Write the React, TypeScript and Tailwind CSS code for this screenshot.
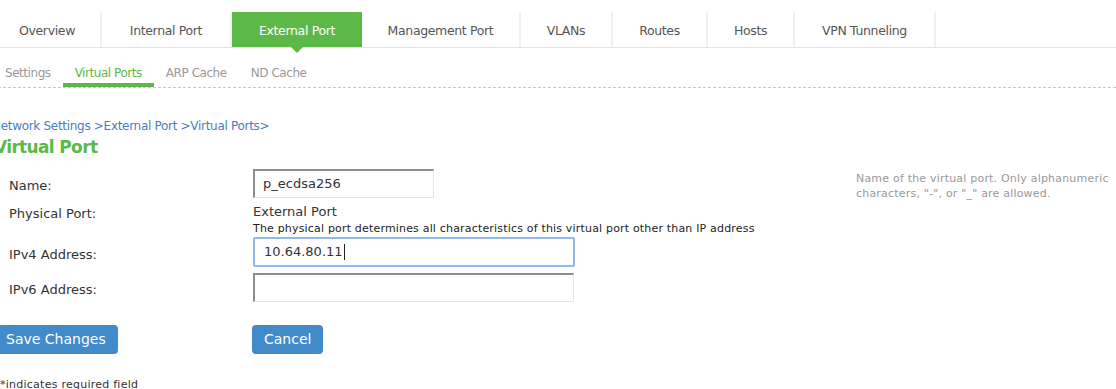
import React from 'react';

const tabs = [
  { label: 'Overview', w: 'w-[108px]' },
  { label: 'Internal Port', w: 'w-[130px]' },
  { label: 'External Port', w: 'w-[130px]', active: true },
  { label: 'Management Port', w: 'w-[159px]' },
  { label: 'VLANs', w: 'w-[92px]' },
  { label: 'Routes', w: 'w-[95px]' },
  { label: 'Hosts', w: 'w-[87px]' },
  { label: 'VPN Tunneling', w: 'w-[141px]' },
];

const subTabs = ['Settings', 'Virtual Ports', 'ARP Cache', 'ND Cache'];

function Row({ label, children, className = '', labelClass = '' }: { label: string; children: React.ReactNode; className?: string; labelClass?: string }) {
  return (
    <div className={`flex ${className}`}>
      <div className={`w-[259px] shrink-0 pl-[15px] text-[13px] text-[#333] ${labelClass}`}>{label}</div>
      <div>{children}</div>
    </div>
  );
}

export default function App() {
  return (
    <div className="h-[389px] w-[1116px] overflow-hidden bg-white font-['DejaVu_Sans',sans-serif]">
      <div className="-ml-[6px]">
        {/* main tabs */}
        <div className="mt-[12px] flex h-[36px] border-b border-[#e2e2e2]">
          {tabs.map((t) => (
            <div
              key={t.label}
              className={`relative flex ${t.w} items-center justify-center pt-[4px] text-[12.5px] tracking-[-0.35px] ${
                t.active ? 'bg-[#5cb947] text-white' : 'border-r-2 border-[#efefef] text-[#555]'
              }`}
            >
              {t.label}
              {t.active && (
                <span className="absolute left-1/2 top-full -ml-[6px] h-0 w-0 border-x-[6px] border-t-[6px] border-x-transparent border-t-[#5cb947]" />
              )}
            </div>
          ))}
        </div>

        {/* sub tabs */}
        <div className="-ml-px flex h-[40px] items-end border-b border-dashed border-[#c8c8c8]">
          {subTabs.map((s) => (
            <div
              key={s}
              className={`px-[12px] pb-[2px] text-[12px] leading-[16px] tracking-[-0.45px] ${
                s === 'Virtual Ports' ? 'border-b-4 border-[#5cb947] text-[#5cb947]' : 'border-b-4 border-transparent text-[#999]'
              }`}
            >
              {s}
            </div>
          ))}
        </div>

        {/* breadcrumb + title */}
        <div className="-ml-[2px] mt-[29px] text-[12px] tracking-[-0.3px] text-[#4a7ebb]">
          Network Settings &gt;External Port &gt;Virtual Ports&gt;
        </div>
        <h1 className="mt-[1px] text-[17px] font-bold leading-[22px] tracking-[-0.65px] text-[#5cb947]">Virtual Port</h1>

        {/* form */}
        <div className="relative mt-[11px]">
          <div className="absolute left-[862px] top-[2px] whitespace-nowrap text-[11px] leading-[15px] tracking-[0.2px] text-[#999]">
            Name of the virtual port. Only alphanumeric
            <br />
            characters, "-", or "_" are allowed.
          </div>

          <Row label="Name:" className="items-center" labelClass="pt-[4px]">
            <div className="flex h-[29px] w-[181px] items-center border-l-2 border-t-2 border-b border-r border-[#8e8e8e] border-b-[#e6e6e6] border-r-[#e6e6e6] px-[8px] text-[13px] text-[#333]">
              p_ecdsa256
            </div>
          </Row>

          <Row label="Physical Port:" className="mt-[6px] items-start">
            <div className="text-[13px] leading-[16px] text-[#333]">External Port</div>
            <div className="mt-[2px] text-[11px] leading-[14px] tracking-[0.18px] text-[#222]">
              The physical port determines all characteristics of this virtual port other than IP address
            </div>
          </Row>

          <Row label="IPv4 Address:" className="mt-[1px] items-center" labelClass="pt-[5px]">
            <div className="flex h-[30px] w-[322px] items-center rounded-[2px] border-2 border-[#93b8ec] px-[9px] text-[13px] text-[#333]">
              10.64.80.11<span className="ml-px inline-block h-[16px] w-px bg-[#222]" />
            </div>
          </Row>

          <Row label="IPv6 Address:" className="mt-[6px] items-center" labelClass="pt-[5px]">
            <div className="h-[29px] w-[321px] border-l-2 border-t-2 border-b border-r border-[#8e8e8e] border-b-[#e6e6e6] border-r-[#e6e6e6]" />
          </Row>

          <div className="mt-[23px] flex">
            <div className="w-[258px] shrink-0">
              <button className="h-[29px] rounded-[4px] bg-[#428bca] px-[12px] text-[14px] text-white">Save Changes</button>
            </div>
            <button className="h-[29px] rounded-[4px] bg-[#428bca] px-[12px] text-[14px] text-white">Cancel</button>
          </div>

          <div className="ml-[6px] mt-[23px] text-[11px] tracking-[0.25px] text-[#333]">*indicates required field</div>
        </div>
      </div>
    </div>
  );
}
